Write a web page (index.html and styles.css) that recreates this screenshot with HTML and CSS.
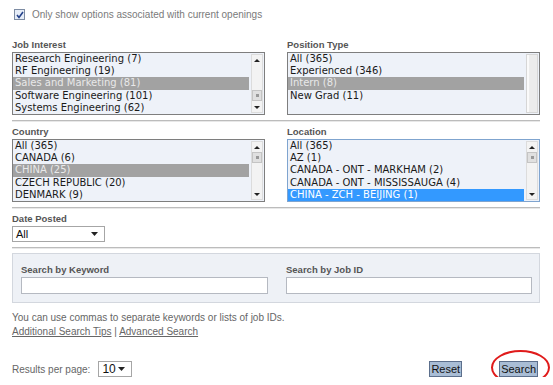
FILE: index.html
```html
<!DOCTYPE html>
<html lang="en">
<head>
    <meta charset="UTF-8">
    <title>Job Search</title>
    <link rel="stylesheet" href="styles.css">
</head>
<body>
    <div class="page">
        <div class="only">
            <span class="cb">
                <svg width="8" height="8" viewBox="0 0 8 8"><polyline points="1,4 3,6.5 7,1" fill="none" stroke="#24418a" stroke-width="1.6"/></svg>
            </span>
            <span>Only show options associated with current openings</span>
        </div>

        <div class="pair first">
            <div class="field">
                <div class="lbl">Job Interest</div>
                <div class="list">
                    <ul class="opts">
                        <li>Research Engineering (7)</li>
                        <li>RF Engineering (19)</li>
                        <li class="sel">Sales and Marketing (81)</li>
                        <li>Software Engineering (101)</li>
                        <li>Systems Engineering (62)</li>
                    </ul>
                    <div class="sb">
                        <div class="arr up"></div>
                        <div class="track end"><div class="thumb"></div></div>
                        <div class="arr down"></div>
                    </div>
                </div>
            </div>
            <div class="field">
                <div class="lbl">Position Type</div>
                <div class="list">
                    <ul class="opts">
                        <li>All (365)</li>
                        <li>Experienced (346)</li>
                        <li class="sel">Intern (8)</li>
                        <li>New Grad (11)</li>
                    </ul>
                    <div class="sb off"></div>
                </div>
            </div>
        </div>
        <div class="sep"></div>

        <div class="pair">
            <div class="field">
                <div class="lbl">Country</div>
                <div class="list">
                    <ul class="opts">
                        <li>All (365)</li>
                        <li>CANADA (6)</li>
                        <li class="sel">CHINA (25)</li>
                        <li>CZECH REPUBLIC (20)</li>
                        <li>DENMARK (9)</li>
                    </ul>
                    <div class="sb">
                        <div class="arr up"></div>
                        <div class="track"><div class="thumb"></div></div>
                        <div class="arr down"></div>
                    </div>
                </div>
            </div>
            <div class="field">
                <div class="lbl">Location</div>
                <div class="list focus">
                    <ul class="opts">
                        <li>All (365)</li>
                        <li>AZ (1)</li>
                        <li>CANADA - ONT - MARKHAM (2)</li>
                        <li>CANADA - ONT - MISSISSAUGA (4)</li>
                        <li class="hl">CHINA - ZCH - BEIJING (1)</li>
                    </ul>
                    <div class="sb">
                        <div class="arr up"></div>
                        <div class="track"><div class="thumb"></div></div>
                        <div class="arr down"></div>
                    </div>
                </div>
            </div>
        </div>
        <div class="sep"></div>

        <div class="lbl">Date Posted</div>
        <div class="dropdown date">
            <span>All</span>
            <svg width="7" height="4" viewBox="0 0 7 4"><polygon points="0,0 7,0 3.5,4" fill="#222"/></svg>
        </div>
        <div class="sep"></div>

        <div class="searchbox">
            <div class="sfield">
                <div class="lbl">Search by Keyword</div>
                <div class="input"></div>
            </div>
            <div class="sfield">
                <div class="lbl">Search by Job ID</div>
                <div class="input"></div>
            </div>
        </div>

        <p class="hint">You can use commas to separate keywords or lists of job IDs.</p>
        <p class="links"><a href="#">Additional Search Tips</a> | <a href="#">Advanced Search</a></p>

        <div class="bottom">
            <div class="perpage">
                <span>Results per page:</span>
                <div class="dropdown small">
                    <span>10</span>
                    <svg width="7" height="4" viewBox="0 0 7 4"><polygon points="0,0 7,0 3.5,4" fill="#222"/></svg>
                </div>
            </div>
            <div class="buttons">
                <button class="btn">Reset</button>
                <button class="btn search">Search</button>
            </div>
        </div>
        <div class="circle"></div>
    </div>
</body>
</html>
```

FILE: styles.css
```css
body {
    margin: 0;
    font-family: "Liberation Sans", Arial, sans-serif;
    background-color: #fff;
    color: #333;
}

.page {
    position: relative;
    width: 528px;
    padding: 9px 13px 0 12px;
}

.only {
    display: flex;
    align-items: center;
    gap: 7px;
    height: 11px;
    margin-left: 2px;
    font-size: 10px;
    color: #7a7a7a;
}

.cb {
    display: flex;
    align-items: center;
    justify-content: center;
    width: 9px;
    height: 9px;
    border: 1px solid #7d8ca3;
    background-color: #e6edf8;
}

.pair {
    display: grid;
    grid-template-columns: 263px 253px;
    column-gap: 12px;
}

.pair.first {
    margin-top: 19px;
}

.lbl {
    font-size: 9.5px;
    line-height: 11px;
    font-weight: bold;
    color: #555;
    margin-bottom: 2px;
}

.list {
    display: flex;
    width: 251px;
    height: 61px;
    border: 1px solid #7e7e7e;
    background-color: #eef2f9;
}

.list.focus {
    border-color: #7fa4cf;
}

.opts {
    flex: 1;
    margin: 0;
    padding: 0;
    list-style: none;
    font-family: "DejaVu Sans", Verdana, sans-serif;
    font-size: 10px;
    line-height: 12.2px;
    overflow: hidden;
}

.opts li {
    padding-left: 2px;
    color: #1a1a1a;
    white-space: nowrap;
}

.opts li.sel {
    background-color: #a2a2a2;
    color: #e9e9e9;
}

.opts li.hl {
    background-color: #3399ff;
    color: #fff;
}

.sb {
    display: flex;
    flex-direction: column;
    width: 10px;
    margin: 1px 1px 1px 2px;
    background-color: #f3f3f3;
    border: 1px solid #dcdcdc;
}

.sb.off {
    background-color: #ececec;
    border-color: #d6d6d6;
    box-shadow: inset 2px 0 0 #fafafa;
}

.arr {
    height: 10px;
    display: flex;
    align-items: center;
    justify-content: center;
}

.arr.up::before,
.arr.down::before {
    content: "";
    border-left: 3px solid transparent;
    border-right: 3px solid transparent;
}

.arr.up::before {
    border-bottom: 3px solid #222;
}

.arr.down::before {
    border-top: 3px solid #222;
}

.track {
    flex: 1;
    display: flex;
    flex-direction: column;
    justify-content: flex-start;
}

.track.end {
    justify-content: flex-end;
}

.thumb {
    height: 9px;
    margin: 0 0 1px;
    background-color: #e0e0e0;
    border: 1px solid #c4c4c4;
    display: flex;
    align-items: center;
    justify-content: center;
}

.thumb::before {
    content: "";
    width: 3px;
    height: 3px;
    background-color: #999;
}

.sep {
    height: 0;
    border-top: 1px solid #bcbcbc;
    border-bottom: 1px solid #e8e8e8;
    margin: 5px 0 4px;
}

.dropdown {
    display: flex;
    align-items: center;
    justify-content: space-between;
    height: 14px;
    padding: 0 6px 0 3px;
    border: 1px solid #a6a6a6;
    background-color: #fff;
    font-size: 11px;
    color: #111;
}

.dropdown.date {
    width: 82px;
}

.searchbox {
    display: grid;
    grid-template-columns: 247px 246px;
    column-gap: 18px;
    margin-top: 3px;
    padding: 10px 8px 8px 8px;
    border: 1px solid #d3d7de;
    background-color: #eef1f6;
}

.input {
    height: 15px;
    margin-top: 2px;
    border: 1px solid #b5b9c1;
    background-color: #fff;
}

.hint,
.links {
    margin: 0;
    font-size: 10px;
    line-height: 12px;
    color: #666;
}

.hint {
    margin-top: 9px;
}

.links {
    margin-top: 2px;
}

.links a {
    color: #666;
}

.bottom {
    display: flex;
    justify-content: space-between;
    align-items: center;
    margin-top: 23px;
}

.perpage {
    display: flex;
    align-items: center;
    gap: 8px;
    font-size: 10px;
    color: #666;
}

.dropdown.small {
    width: 23px;
    font-size: 12px;
}

.buttons {
    display: flex;
    gap: 37px;
    margin-right: 2px;
}

.btn {
    height: 16px;
    padding: 0 1px;
    border: 1px solid #5c6f8c;
    background-color: #a9bdd5;
    font-family: "Liberation Sans", Arial, sans-serif;
    font-size: 11px;
    line-height: 14px;
    color: #111;
}

.circle {
    position: absolute;
    left: 491px;
    top: 350px;
    width: 55px;
    height: 31px;
    border: 2px solid #e01b1b;
    border-radius: 50%;
}
```
